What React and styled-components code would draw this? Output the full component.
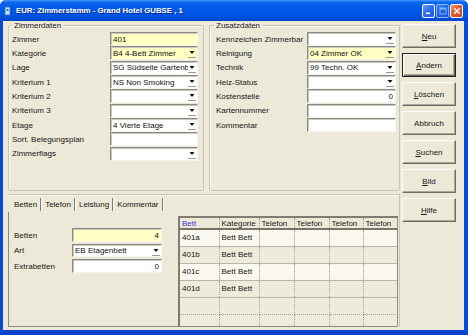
import React from 'react';
import styled, { createGlobalStyle, css } from 'styled-components';

const Global = createGlobalStyle`
  html, body { margin: 0; padding: 0; background: #fff; }
  body { font-family: "Liberation Sans", Arial, sans-serif; }
`;

const Window = styled.div`
  width: 468px;
  height: 335px;
  display: flex;
  flex-direction: column;
  background: #0a48d6;
  border-radius: 6px 6px 0 0;
  overflow: hidden;
  font-family: "Liberation Sans", Arial, sans-serif;
  font-size: 8px;
  color: #161616;
`;

const TitleBar = styled.div`
  height: 21px;
  flex: none;
  display: flex;
  align-items: center;
  padding: 0 5px 0 4px;
  box-sizing: border-box;
  background: linear-gradient(to bottom, #4a9cff 0%, #0c68f0 10%, #005be8 35%, #0055e4 65%, #004ed9 88%, #0043c6 100%);
`;

const TitleIcon = styled.svg`
  flex: none;
  margin-right: 4px;
`;

const TitleText = styled.div`
  flex: 1;
  color: #fff;
  font-weight: bold;
  font-size: 7.8px;
  text-shadow: 1px 1px 0 #0b2a8e;
  white-space: nowrap;
`;

const CtlButton = styled.div`
  width: 13px;
  height: 14px;
  box-sizing: border-box;
  margin-left: 1px;
  border: 1px solid #fff;
  border-radius: 2px;
  display: flex;
  align-items: center;
  justify-content: center;
  background: ${p => (p.$close
    ? 'linear-gradient(135deg, #f09a7c 0%, #e45a30 45%, #c9401c 100%)'
    : 'linear-gradient(135deg, #6aa0ff 0%, #2f6ef0 45%, #1f56d8 100%)')};
  opacity: ${p => (p.$disabled ? 0.55 : 1)};
`;

const Frame = styled.div`
  flex: 1;
  display: flex;
  background: #ece9d8;
  border-left: 3px solid #0a4ad8;
  border-right: 4px solid #0a4ad8;
  border-bottom: 5px solid #0a44cc;
  padding-left: 5px;
  min-height: 0;
`;

const MainCol = styled.div`
  width: 392px;
  flex: none;
  display: flex;
  flex-direction: column;
`;

const TopRow = styled.div`
  height: 170px;
  flex: none;
  display: flex;
  gap: 5px;
`;

const Group = styled.fieldset`
  margin: 0;
  box-sizing: border-box;
  width: ${p => p.$w}px;
  padding: 2px ${p => p.$pr}px 0 ${p => p.$pl}px;
  border: 1px solid #c8c5b3;
  border-radius: 2px;
  box-shadow: inset 1px 1px 0 #f8f7f2;
  display: flex;
  flex-direction: column;
  min-width: 0;
`;

const Legend = styled.legend`
  padding: 0 2px;
  margin-left: ${p => p.$ml || 0}px;
  font-size: 8px;
  line-height: 9px;
  color: #161616;
`;

const FieldRow = styled.div`
  display: flex;
  align-items: center;
  height: ${p => p.$h || 14.33}px;
  flex: none;
`;

const Label = styled.div`
  width: ${p => p.$w}px;
  flex: none;
  white-space: nowrap;
  overflow: hidden;
`;

const Field = styled.div`
  box-sizing: border-box;
  width: ${p => p.$w}px;
  height: ${p => p.$h || 14}px;
  flex: none;
  display: flex;
  align-items: center;
  background: ${p => (p.$yellow ? '#ffffc4' : '#ffffff')};
  border-top: 1px solid #8c8a80;
  border-left: 1px solid #8c8a80;
  border-right: 1px solid #f6f5ef;
  border-bottom: 1px solid #f6f5ef;
  box-shadow: inset 1px 1px 0 #c9c7bd;
  overflow: hidden;
`;

const Value = styled.div`
  flex: 1;
  min-width: 0;
  padding: 0 ${p => (p.$right ? 2 : 0)}px 0 2px;
  white-space: nowrap;
  overflow: hidden;
  text-align: ${p => (p.$right ? 'right' : 'left')};
  color: #111;
`;

const ArrowBox = styled.svg`
  flex: none;
  margin-right: 1px;
`;

const Arrow = () => (
  <ArrowBox width="8" height="12" viewBox="0 0 8 12">
    <polygon points="1.5,4 6.5,4 4,7" fill="#111" />
    <rect x="0" y="10" width="8" height="1" fill="#9c9a90" />
  </ArrowBox>
);

const BottomPanel = styled.div`
  flex: 1;
  min-height: 0;
  margin-top: 3px;
  margin-bottom: 3px;
  border-top: 1px solid #c8c5b3;
  border-right: 1px solid #c8c5b3;
  box-shadow: inset 0 1px 0 #fbfaf5;
  padding-top: 2px;
  display: flex;
  flex-direction: column;
`;

const TabRow = styled.div`
  height: 15px;
  flex: none;
  display: flex;
  align-items: center;
  padding-left: 3px;
`;

const Tab = styled.div`
  height: 13px;
  padding: 0 3px;
  display: flex;
  align-items: center;
  border-right: 1px solid #7c7a70;
  box-shadow: 1px 0 0 #fff;
  margin-right: 1px;
  white-space: nowrap;
`;

const Content = styled.div`
  flex: 1;
  min-height: 0;
  display: flex;
  border-left: 1px solid #8c8a7c;
  border-bottom: 1px solid #8c8a7c;
  margin-right: 1px;
`;

const SubForm = styled.div`
  width: 169px;
  flex: none;
  box-sizing: border-box;
  padding: 16px 0 0 5px;
  display: flex;
  flex-direction: column;
  gap: 1.5px;
`;

const GridBox = styled.div`
  width: 220px;
  flex: none;
  box-sizing: border-box;
  margin-top: 4px;
  border-left: 2px solid #7f7d72;
  border-top: 2px solid #7f7d72;
  border-right: 1px solid #8f8d82;
  background: #eeebdd;
  overflow: hidden;
`;

const Table = styled.table`
  border-collapse: collapse;
  table-layout: fixed;
  width: 217px;
  font-size: 8px;
`;

const HeadCell = styled.th`
  height: 10px;
  padding: 0 0 0 2px;
  font-weight: normal;
  text-align: left;
  white-space: nowrap;
  overflow: hidden;
  color: ${p => (p.$sorted ? '#3a3ad0' : '#1a1a1a')};
  background: #ece9d8;
  border-right: 1px dotted #9a988c;
  border-bottom: 2px solid #77756a;
`;

const Row = styled.tr`
  height: 17px;
  background: ${p => (p.$light ? '#fbf9ef' : '#eeebdd')};
`;

const Cell = styled.td`
  padding: 0 0 0 2px;
  white-space: nowrap;
  overflow: hidden;
  vertical-align: middle;
  border-right: 1px dotted #a3a195;
  border-bottom: 1px ${p => (p.$empty ? 'dotted #a3a195' : 'solid #b9b6a8')};
`;

const ButtonCol = styled.div`
  width: 54px;
  flex: none;
  margin-left: 2px;
  padding-top: 3px;
  display: flex;
  flex-direction: column;
  gap: 5px;
`;

const Btn = styled.button`
  width: 54px;
  height: 24px;
  box-sizing: border-box;
  margin: 0;
  padding: 0;
  font-family: "Liberation Sans", Arial, sans-serif;
  font-size: 8px;
  color: #161616;
  background: #ece9d8;
  border: 1px solid;
  border-color: #ffffff #6f6d62 #6f6d62 #ffffff;
  box-shadow: inset -1px -1px 0 #aca899;
  ${p => p.$default && css`
    border: 1px solid #202020;
    box-shadow: inset 1px 1px 0 #ffffff, inset -1px -1px 0 #6f6d62, inset -2px -2px 0 #aca899;
  `}
`;

const leftRows = [
  { label: 'Zimmer', value: '401', yellow: true },
  { label: 'Kategorie', value: 'B4 4-Bett Zimmer', yellow: true, combo: true },
  { label: 'Lage', value: 'SG Südseite Gartenb', combo: true },
  { label: 'Kriterium 1', value: 'NS Non Smoking', combo: true },
  { label: 'Kriterium 2', combo: true },
  { label: 'Kriterium 3', combo: true },
  { label: 'Etage', value: '4 Vierte Etage', combo: true },
  { label: 'Sort. Belegungsplan' },
  { label: 'Zimmerflags', combo: true },
];

const rightRows = [
  { label: 'Kennzeichen Zimmerbar', combo: true },
  { label: 'Reinigung', value: '04 Zimmer OK', yellow: true, combo: true },
  { label: 'Technik', value: '99 Techn. OK', combo: true },
  { label: 'Heiz-Status', combo: true },
  { label: 'Kostenstelle', value: '0', right: true },
  { label: 'Kartennummer' },
  { label: 'Kommentar' },
];

const InputRow = ({ r, lw, fw, h, fh }) => (
  <FieldRow $h={h}>
    <Label $w={lw}>{r.label}</Label>
    <Field $w={fw} $yellow={r.yellow} $h={fh}>
      <Value $right={r.right}>{r.value || ''}</Value>
      {r.combo && <Arrow />}
    </Field>
  </FieldRow>
);

const cols = [39, 40, 35, 35, 34, 34];
const headers = ['Bett', 'Kategorie', 'Telefon', 'Telefon', 'Telefon', 'Telefon'];
const beds = ['401a', '401b', '401c', '401d'];

export default function App() {
  return (
    <>
      <Global />
      <Window>
        <TitleBar>
          <TitleIcon width="8" height="10" viewBox="0 0 8 10">
            <rect x="1" y="1" width="5" height="8" fill="#bfe3ff" stroke="#3a6fb0" strokeWidth="0.8" />
            <rect x="2.5" y="3" width="2" height="2" fill="#3a6fb0" />
          </TitleIcon>
          <TitleText>EUR: Zimmerstamm - Grand Hotel GUBSE , 1</TitleText>
          <CtlButton>
            <svg width="7" height="8" viewBox="0 0 7 8"><rect x="1" y="5.5" width="4" height="1.6" fill="#fff" /></svg>
          </CtlButton>
          <CtlButton $disabled>
            <svg width="8" height="8" viewBox="0 0 8 8"><rect x="1" y="1" width="6" height="6" fill="none" stroke="#fff" strokeWidth="1" /><rect x="1" y="1" width="6" height="1.5" fill="#fff" /></svg>
          </CtlButton>
          <CtlButton $close>
            <svg width="8" height="8" viewBox="0 0 8 8"><path d="M1.2 1.2 L6.8 6.8 M6.8 1.2 L1.2 6.8" stroke="#fff" strokeWidth="1.5" /></svg>
          </CtlButton>
        </TitleBar>
        <Frame>
          <MainCol>
            <TopRow>
              <Group $w={196} $pl={3} $pr={5}>
                <Legend>Zimmerdaten</Legend>
                {leftRows.map(r => <InputRow key={r.label} r={r} lw={98} fw={88} />)}
              </Group>
              <Group $w={191} $pl={6} $pr={3}>
                <Legend $ml={-2}>Zusatzdaten</Legend>
                {rightRows.map(r => <InputRow key={r.label} r={r} lw={91} fw={89} />)}
              </Group>
            </TopRow>
            <BottomPanel>
              <TabRow>
                <Tab>Betten</Tab>
                <Tab>Telefon</Tab>
                <Tab>Leistung</Tab>
                <Tab>Kommentar</Tab>
              </TabRow>
              <Content>
                <SubForm>
                  <InputRow r={{ label: 'Betten', value: '4', yellow: true, right: true }} lw={58} fw={90} h={14} />
                  <InputRow r={{ label: 'Art', value: 'EB Etagenbett', combo: true }} lw={58} fw={90} h={14} fh={13} />
                  <InputRow r={{ label: 'Extrabetten', value: '0', right: true }} lw={58} fw={90} h={14} />
                </SubForm>
                <GridBox>
                  <Table>
                    <colgroup>
                      {cols.map((w, i) => <col key={i} style={{ width: w }} />)}
                    </colgroup>
                    <thead>
                      <tr>
                        {headers.map((h, i) => <HeadCell key={i} $sorted={i === 0}>{h}</HeadCell>)}
                      </tr>
                    </thead>
                    <tbody>
                      {beds.map((b, i) => (
                        <Row key={b} $light={i % 2 === 0}>
                          <Cell>{b}</Cell>
                          <Cell>Bett Bett</Cell>
                          <Cell /><Cell /><Cell /><Cell />
                        </Row>
                      ))}
                      {[0, 1].map(i => (
                        <Row key={'e' + i}>
                          {cols.map((_, j) => <Cell key={j} $empty />)}
                        </Row>
                      ))}
                    </tbody>
                  </Table>
                </GridBox>
              </Content>
            </BottomPanel>
          </MainCol>
          <ButtonCol>
            <Btn><u>N</u>eu</Btn>
            <Btn $default><u>Ä</u>ndern</Btn>
            <Btn><u>L</u>öschen</Btn>
            <Btn>Abbruch</Btn>
            <Btn><u>S</u>uchen</Btn>
            <Btn><u>B</u>ild</Btn>
            <Btn><u>H</u>ilfe</Btn>
          </ButtonCol>
        </Frame>
      </Window>
    </>
  );
}
